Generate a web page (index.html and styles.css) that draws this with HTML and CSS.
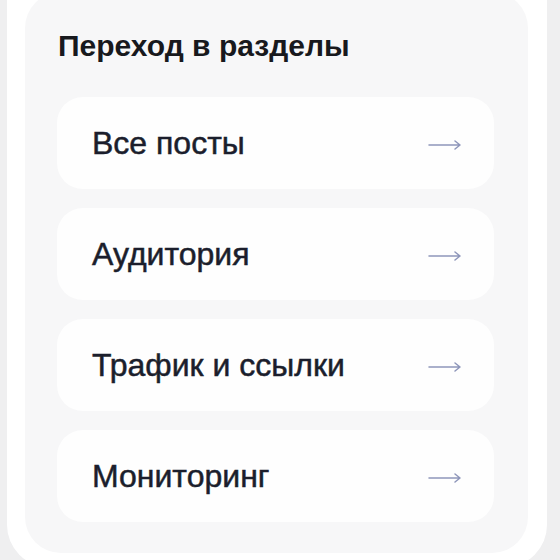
FILE: index.html
```html
<!DOCTYPE html>
<html>
<head>
<meta charset="utf-8">
<link rel="stylesheet" href="styles.css">
</head>
<body>
<div class="panel">
    <div class="card">
        <h2 class="title">Переход в разделы</h2>
        <div class="links">
            <a class="link" href="#">
                <span class="label">Все посты</span>
                <svg class="arrow" width="34" height="12" viewBox="0 0 34 12"><path d="M1 6H32M27 2L32 6L27 10"/></svg>
            </a>
            <a class="link" href="#">
                <span class="label">Аудитория</span>
                <svg class="arrow" width="34" height="12" viewBox="0 0 34 12"><path d="M1 6H32M27 2L32 6L27 10"/></svg>
            </a>
            <a class="link" href="#">
                <span class="label">Трафик и ссылки</span>
                <svg class="arrow" width="34" height="12" viewBox="0 0 34 12"><path d="M1 6H32M27 2L32 6L27 10"/></svg>
            </a>
            <a class="link" href="#">
                <span class="label">Мониторинг</span>
                <svg class="arrow" width="34" height="12" viewBox="0 0 34 12"><path d="M1 6H32M27 2L32 6L27 10"/></svg>
            </a>
        </div>
    </div>
</div>
</body>
</html>
```

FILE: styles.css
```css
html, body {
    margin: 0;
    height: 100%;
    overflow: hidden;
}
body {
    background: #efeff0;
    font-family: "Liberation Sans", Arial, sans-serif;
}

.panel {
    margin-left: 7px;
    width: 540px;
    box-sizing: border-box;
    padding: 0 19px 14px 18px;
    background: #ffffff;
    border-radius: 0 0 42px 42px;
}

.card {
    margin-top: -8px;
    padding: 37px 34px 31px 32px;
    background: #f7f7f8;
    border-radius: 36px;
}

.title {
    margin: 0 0 34px 1px;
    font-size: 30px;
    line-height: 34px;
    font-weight: bold;
    color: #18191d;
}

.links {
    display: flex;
    flex-direction: column;
    gap: 19px;
}
.link {
    display: flex;
    align-items: center;
    justify-content: space-between;
    height: 92px;
    padding: 0 32px 0 35px;
    background: #fefefe;
    border-radius: 26px;
    text-decoration: none;
}
.label {
    font-size: 32px;
    color: #1b1e2c;
    /* labels sit between regular and bold */
    -webkit-text-stroke: 0.5px currentColor;
}
.arrow {
    margin-top: 3px;
    fill: none;
    stroke: #8e96ba;
    stroke-width: 1.5;
    stroke-linecap: round;
    stroke-linejoin: round;
}
```
